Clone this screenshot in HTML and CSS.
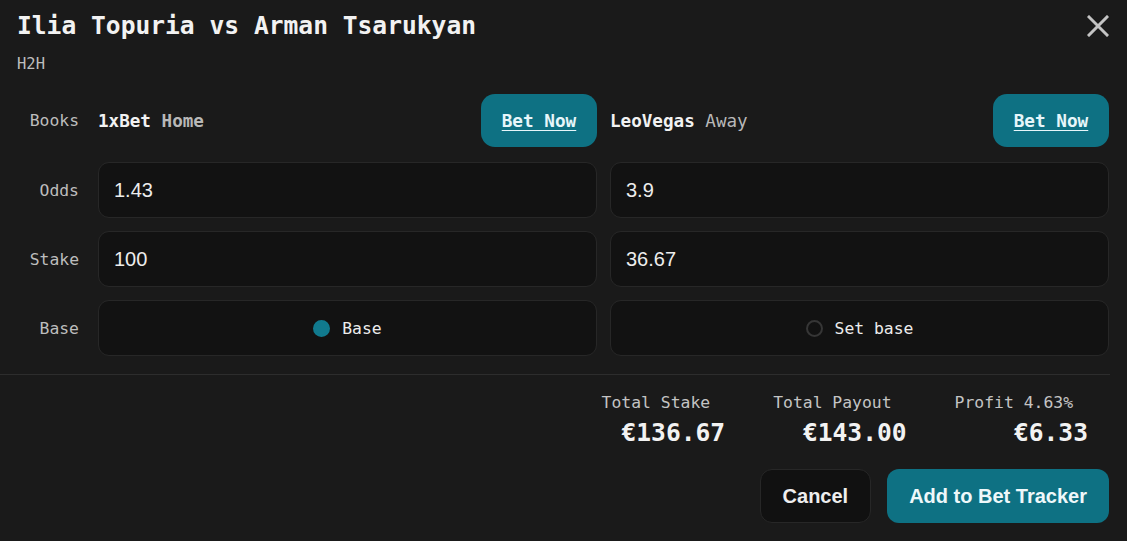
FILE: index.html
```
<!DOCTYPE html>
<html lang="en">
<head>
    <meta charset="UTF-8">
    <meta name="viewport" content="width=device-width, initial-scale=1.0">
    <title>Ilia Topuria vs Arman Tsarukyan</title>
    <link rel="stylesheet" href="styles.css">
</head>
<body>
    <div class="modal">
        <div class="modal-header">
            <h1>Ilia Topuria vs Arman Tsarukyan</h1>
            <button class="close-btn" aria-label="Close">
                <svg width="22" height="22" viewBox="0 0 22 22">
                    <path d="M2 2 L20 20 M20 2 L2 20" stroke="#c4c4c4" stroke-width="3" stroke-linecap="square" fill="none"/>
                </svg>
            </button>
        </div>
        <p class="market">H2H</p>

        <div class="calc-grid">
            <div class="row-label books-label">Books</div>
            <div class="book-cell">
                <span class="book-name">1xBet</span>
                <span class="book-side home">Home</span>
                <a class="bet-btn" href="#">Bet Now</a>
            </div>
            <div class="book-cell">
                <span class="book-name">LeoVegas</span>
                <span class="book-side">Away</span>
                <a class="bet-btn" href="#">Bet Now</a>
            </div>

            <div class="row-label">Odds</div>
            <input class="field" type="text" value="1.43">
            <input class="field" type="text" value="3.9">

            <div class="row-label">Stake</div>
            <input class="field" type="text" value="100">
            <input class="field" type="text" value="36.67">

            <div class="row-label">Base</div>
            <label class="base-option">
                <span class="radio checked"></span>
                <span>Base</span>
            </label>
            <label class="base-option">
                <span class="radio"></span>
                <span>Set base</span>
            </label>
        </div>

        <hr class="divider">

        <div class="summary">
            <div class="summary-item">
                <span class="summary-label">Total Stake</span>
                <span class="summary-value">€136.67</span>
            </div>
            <div class="summary-item">
                <span class="summary-label">Total Payout</span>
                <span class="summary-value">€143.00</span>
            </div>
            <div class="summary-item">
                <span class="summary-label">Profit 4.63%</span>
                <span class="summary-value">€6.33</span>
            </div>
        </div>

        <div class="actions">
            <button class="cancel-btn">Cancel</button>
            <button class="add-btn">Add to Bet Tracker</button>
        </div>
    </div>
</body>
</html>
```

FILE: styles.css
```
* {
    margin: 0;
    padding: 0;
    box-sizing: border-box;
}

body {
    font-family: "DejaVu Sans Mono", "Liberation Mono", monospace;
    background-color: #1a1a1a;
    color: #eee;
    overflow: hidden;
}

.modal {
    padding: 10px 18px 0 17px;
}

.modal-header {
    display: flex;
    justify-content: space-between;
    align-items: center;
    height: 32px;
}

.modal-header h1 {
    font-size: 24.6px;
    font-weight: bold;
    color: #f2f2f2;
    line-height: 32px;
}

.close-btn {
    background: none;
    border: none;
    width: 22px;
    height: 22px;
    cursor: pointer;
    display: flex;
}

.market {
    margin-top: 12px;
    font-size: 15.5px;
    line-height: 20px;
    color: #bdbdbd;
}

.calc-grid {
    margin-top: 20px;
    display: grid;
    grid-template-columns: 68px 1fr 1fr;
    grid-template-rows: 55px repeat(3, 56px);
    column-gap: 13px;
    row-gap: 13px;
}

.row-label {
    font-size: 16.4px;
    color: #bdbdbd;
    text-align: right;
    padding-right: 6px;
    align-self: center;
}

.books-label {
    align-self: start;
    line-height: 53px;
}

.book-cell {
    height: 53px;
    display: flex;
    align-items: center;
    font-size: 17.6px;
}

.book-name {
    font-weight: bold;
    color: #f2f2f2;
    margin-right: 10.6px;
}

.book-side {
    color: #b8b8b8;
}

.book-side.home {
    font-weight: bold;
}

.bet-btn {
    margin-left: auto;
    height: 53px;
    width: 116px;
    display: flex;
    align-items: center;
    justify-content: center;
    background-color: #0e7183;
    border-radius: 14px;
    color: #e6f6fa;
    font-size: 17.7px;
    font-weight: bold;
    text-decoration: underline;
    text-underline-offset: 3px;
}

.field {
    width: 100%;
    height: 56px;
    background-color: #121212;
    border: 1px solid #272727;
    border-radius: 11px;
    padding: 0 15px;
    font-family: "Liberation Sans", Arial, sans-serif;
    font-size: 20px;
    color: #ededed;
    outline: none;
}

.base-option {
    display: flex;
    align-items: center;
    justify-content: center;
    gap: 12px;
    background-color: #121212;
    border: 1px solid #272727;
    border-radius: 11px;
    font-size: 16.4px;
    color: #ececec;
}

.radio {
    width: 17px;
    height: 17px;
    border-radius: 50%;
    border: 2px solid #363636;
}

.radio.checked {
    background-color: #117a8e;
    border-color: #117a8e;
}

.divider {
    border: none;
    border-top: 1px solid #2d2d2d;
    margin: 18px -1px 0 -17px;
}

.summary {
    display: flex;
    justify-content: flex-end;
    gap: 48px;
    padding: 18px 21px 0 0;
}

.summary-item {
    display: flex;
    flex-direction: column;
    align-items: flex-end;
}

.summary-label {
    font-size: 16.4px;
    line-height: 20px;
    color: #c4c4c4;
    padding-right: 15px;
}

.summary-value {
    margin-top: 5px;
    font-size: 24.6px;
    line-height: 30px;
    font-weight: bold;
    color: #f2f2f2;
}

.actions {
    display: flex;
    justify-content: flex-end;
    gap: 16px;
    margin-top: 21px;
}

.actions button {
    height: 54px;
    padding: 0 22px;
    border-radius: 12px;
    font-family: "Liberation Sans", Arial, sans-serif;
    font-size: 20px;
    font-weight: bold;
    cursor: pointer;
}

.cancel-btn {
    background-color: #111;
    border: 1px solid #272727;
    color: #eee;
}

.add-btn {
    background-color: #0e7183;
    border: none;
    color: #eef8fa;
}
```
